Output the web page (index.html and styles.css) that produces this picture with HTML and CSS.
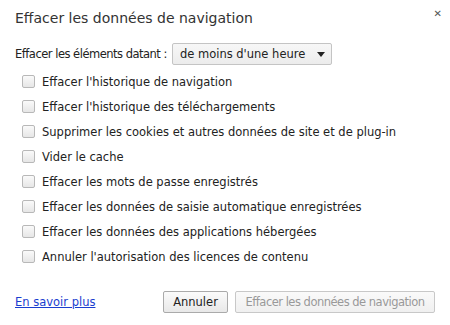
FILE: index.html
```html
<!DOCTYPE html>
<html lang="fr">
<head>
    <meta charset="UTF-8">
    <title>Effacer les données de navigation</title>
    <link rel="stylesheet" href="styles.css">
</head>
<body>
    <div class="dialog">
        <div class="header">
            <h1 class="title">Effacer les données de navigation</h1>
            <span class="close">&#x2715;</span>
        </div>
        <div class="period">
            <span class="period-label">Effacer les éléments datant :</span>
            <div class="select">
                <span>de moins d'une heure</span>
                <span class="arrow"></span>
            </div>
        </div>
        <ul class="options">
            <li><span class="box"></span>Effacer l'historique de navigation</li>
            <li><span class="box"></span>Effacer l'historique des téléchargements</li>
            <li><span class="box"></span>Supprimer les cookies et autres données de site et de plug-in</li>
            <li><span class="box"></span>Vider le cache</li>
            <li><span class="box"></span>Effacer les mots de passe enregistrés</li>
            <li><span class="box"></span>Effacer les données de saisie automatique enregistrées</li>
            <li><span class="box"></span>Effacer les données des applications hébergées</li>
            <li><span class="box"></span>Annuler l'autorisation des licences de contenu</li>
        </ul>
        <div class="footer">
            <a href="#" class="more">En savoir plus</a>
            <div class="actions">
                <button class="btn cancel">Annuler</button>
                <button class="btn clear" disabled>Effacer les données de navigation</button>
            </div>
        </div>
    </div>
</body>
</html>
```

FILE: styles.css
```css
body {
    margin: 0;
    background-color: #fff;
    font-family: "DejaVu Sans", sans-serif;
    font-size: 11.5px;
    color: #222;
}
.dialog {
    width: 450px;
    height: 325px;
    box-sizing: border-box;
    padding: 8px 15px 0 15px;
}
.header {
    display: flex;
    justify-content: space-between;
    align-items: flex-start;
}
.title {
    margin: 0;
    font-size: 14px;
    font-weight: normal;
    color: #333;
    line-height: 20px;
}
.close {
    font-size: 10px;
    color: #555;
    font-weight: bold;
    margin-right: -7px;
}
.period {
    display: flex;
    align-items: center;
    gap: 5px;
    margin-top: 15px;
}
.period-label {
    letter-spacing: -0.5px;
}
.select {
    display: flex;
    justify-content: space-between;
    align-items: center;
    width: 160px;
    height: 22px;
    box-sizing: border-box;
    padding: 0 6px 0 7px;
    border: 1px solid #c4c4c4;
    border-radius: 2px;
    background: linear-gradient(#f7f7f7, #ececec);
}
.arrow {
    width: 0;
    height: 0;
    border-left: 4px solid transparent;
    border-right: 4px solid transparent;
    border-top: 5px solid #222;
}
.options {
    list-style: none;
    margin: 4px 0 0 7px;
    padding: 0;
}
.options li {
    display: flex;
    align-items: center;
    height: 25px;
}
.box {
    width: 11px;
    height: 11px;
    border: 1px solid #b8b8b8;
    border-radius: 2px;
    background: linear-gradient(#fafafa, #e6e6e6);
    margin-right: 7px;
}
.footer {
    display: flex;
    justify-content: space-between;
    align-items: center;
    margin-top: 22px;
}
.more {
    color: #1a3ecf;
    text-decoration: underline;
}
.actions {
    display: flex;
    gap: 7px;
}
.btn {
    font-family: inherit;
    font-size: 11.5px;
    height: 22px;
    padding: 0;
    border: 1px solid #aaa;
    border-radius: 2px;
    background: linear-gradient(#fbfbfb, #e8e8e8);
    color: #222;
}
.cancel {
    width: 65px;
}
.clear {
    width: 200px;
    letter-spacing: -0.5px;
}
.btn:disabled {
    color: #999;
    border-color: #c8c8c8;
    background: linear-gradient(#fafafa, #f0f0f0);
}
```
